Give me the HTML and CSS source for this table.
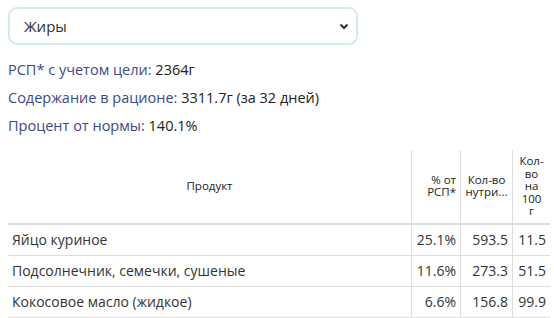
FILE: index.html
```html
<!DOCTYPE html>
<html lang="ru">
<head>
<meta charset="utf-8">
<link rel="stylesheet" href="styles.css">
</head>
<body>
<div class="page">
  <div class="select">
    <span class="select-value">Жиры</span>
    <svg class="chev" width="10" height="7" viewBox="0 0 10 7"><path d="M1.5 1.5 L5 5 L8.5 1.5" fill="none" stroke="#333" stroke-width="2"/></svg>
  </div>
  <div class="stats">
    <p class="stat"><span class="label">РСП* с учетом цели:</span> 2364г</p>
    <p class="stat"><span class="label">Содержание в рационе:</span> 3311.7г (за 32 дней)</p>
    <p class="stat"><span class="label">Процент от нормы:</span> 140.1%</p>
  </div>
  <div class="table-wrap">
    <table class="tbl">
      <thead>
        <tr>
          <th class="c-prod">Продукт</th>
          <th class="c-pct">% от РСП*</th>
          <th class="c-amt">Кол-во нутри...</th>
          <th class="c-per"><span class="narrow">Кол-во на 100 г</span></th>
        </tr>
      </thead>
      <tbody>
        <tr><td>Яйцо куриное</td><td class="num">25.1%</td><td class="num">593.5</td><td class="num">11.5</td></tr>
        <tr><td>Подсолнечник, семечки, сушеные</td><td class="num">11.6%</td><td class="num">273.3</td><td class="num">51.5</td></tr>
        <tr><td>Кокосовое масло (жидкое)</td><td class="num">6.6%</td><td class="num">156.8</td><td class="num">99.9</td></tr>
        <tr><td>&nbsp;</td><td class="num"></td><td class="num"></td><td class="num"></td></tr>
      </tbody>
    </table>
    <div class="scroll-track"><div class="scroll-thumb"></div></div>
  </div>
</div>
</body>
</html>
```

FILE: styles.css
```css
html, body {
  margin: 0;
  padding: 0;
  background: #fff;
  overflow: hidden;
}
body {
  font-family: "Open Sans", "Noto Sans", sans-serif;
  color: #222;
}
.page {
  padding: 7px 8px 0 8px;
}
.select {
  box-sizing: border-box;
  width: 350px;
  height: 38px;
  border: 2px solid #d5e9ef;
  border-radius: 9px;
  display: flex;
  align-items: center;
  justify-content: space-between;
  padding: 0 7px 0 14px;
}
.select-value {
  font-size: 15px;
  color: #333;
}
.chev {
  display: block;
}
.stats {
  margin-top: 11px;
}
.stat {
  margin: 0;
  font-size: 14.5px;
  line-height: 28px;
  color: #222;
}
.label {
  color: #3b4a86;
}
.table-wrap {
  position: relative;
  margin-top: 10px;
  width: 546px;
}
.tbl {
  border-collapse: collapse;
  width: 542px;
  table-layout: fixed;
}
.tbl th {
  font-size: 11.5px;
  font-weight: normal;
  line-height: 12.5px;
  color: #222;
  padding: 5px 4px;
  vertical-align: middle;
  border-bottom: 2px solid #ddd;
}
.tbl th + th, .tbl td + td {
  border-left: 1px solid #ddd;
}
.c-prod { width: 395px; text-align: center; }
.c-pct { width: 40px; text-align: right; }
.c-amt { width: 43px; text-align: center; }
.c-per { text-align: center; }
.narrow {
  display: inline-block;
  max-width: 27px;
}
.tbl td {
  font-size: 14px;
  line-height: 20px;
  padding: 5px 4px 5px;
  color: #333;
  border-bottom: 1px solid #ddd;
  white-space: nowrap;
}
.tbl td.num {
  text-align: right;
}
.scroll-track {
  position: absolute;
  top: 0;
  right: -4px;
  width: 4px;
  height: 200px;
  background: #f1f1f1;
}
.scroll-thumb {
  margin-top: 17px;
  height: 118px;
  background: #c1c1c1;
}
```
